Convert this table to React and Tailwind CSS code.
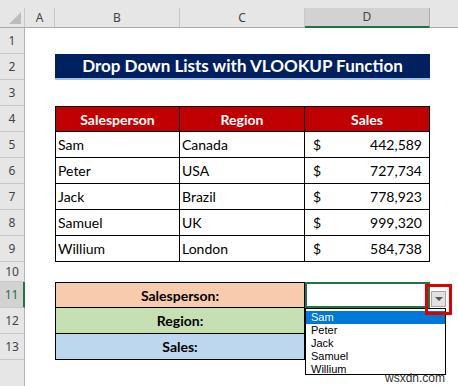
const rowsTop = [
  { name: "Sam", region: "Canada", sales: "442,589" },
  { name: "Peter", region: "USA", sales: "727,734" },
  { name: "Jack", region: "Brazil", sales: "778,923" },
  { name: "Samuel", region: "UK", sales: "999,320" },
  { name: "Willium", region: "London", sales: "584,738" },
];

const listItems = ["Sam", "Peter", "Jack", "Samuel", "Willium"];

const RowHead = ({ n, selected, h = "h-[26px]" }) => (
  <div
    className={`w-[25px] shrink-0 ${h} flex items-center justify-center text-[12px] font-['Noto_Sans',sans-serif] border-b border-[#c8c8c8] ${
      selected
        ? "bg-[#d2d2d2] text-[#217346] border-r-2 border-r-[#217346]"
        : "bg-[#e6e6e6] text-[#444] border-r border-r-[#b4b4b4]"
    }`}
  >
    {n}
  </div>
);

const Blank = ({ w }) => <div className={`${w} shrink-0 h-full`} />;

export default function App() {
  return (
    <div className="relative w-[458px] h-[386px] overflow-hidden bg-white font-['Lato',sans-serif] text-[14px] text-black">
      {/* Column headers */}
      <div className="h-[28px] bg-[#e6e6e6] flex flex-col">
        <div className="h-[9px]" />
        <div className="flex flex-1 border-b border-[#ababab] text-[12px] text-[#444] font-['Noto_Sans',sans-serif]">
          <div className="w-[25px] shrink-0 border-r border-[#c8c8c8] relative">
            <div className="absolute right-[3px] bottom-[3px] w-0 h-0 border-l-[12px] border-l-transparent border-b-[12px] border-b-[#bcbcbc]" />
          </div>
          <div className="w-[30px] shrink-0 border-r border-[#c8c8c8] flex items-center justify-center">A</div>
          <div className="w-[125px] shrink-0 border-r border-[#c8c8c8] flex items-center justify-center">B</div>
          <div className="w-[125px] shrink-0 border-r border-[#c8c8c8] flex items-center justify-center">C</div>
          <div className="w-[125px] shrink-0 border-r border-[#ababab] bg-[#d2d2d2] border-b-2 border-b-[#217346] flex items-center justify-center -mb-px">D</div>
          <div className="flex-1" />
        </div>
      </div>

      {/* Row 1 */}
      <div className="flex h-[26px]">
        <RowHead n="1" />
      </div>

      {/* Row 2 - title */}
      <div className="flex h-[26px]">
        <RowHead n="2" />
        <Blank w="w-[30px]" />
        <div className="w-[375px] shrink-0 h-full bg-[#002060] border-b-2 border-[#9dc3e6] flex items-center justify-center text-white font-bold text-[17px]">
          Drop Down Lists with VLOOKUP Function
        </div>
      </div>

      {/* Row 3 */}
      <div className="flex h-[26px]">
        <RowHead n="3" />
      </div>

      {/* Row 4 - table header */}
      <div className="flex h-[26px]">
        <RowHead n="4" />
        <Blank w="w-[30px]" />
        <div className="w-[125px] shrink-0 h-full bg-[#c00000] border border-black flex items-center justify-center text-white font-bold">Salesperson</div>
        <div className="w-[125px] shrink-0 h-full bg-[#c00000] border-y border-r border-black flex items-center justify-center text-white font-bold">Region</div>
        <div className="w-[125px] shrink-0 h-full bg-[#c00000] border-y border-r border-black flex items-center justify-center text-white font-bold">Sales</div>
      </div>

      {/* Rows 5-9 */}
      {rowsTop.map((r, i) => (
        <div key={r.name} className="flex h-[26px]">
          <RowHead n={String(i + 5)} />
          <Blank w="w-[30px]" />
          <div className="w-[125px] shrink-0 h-full border-x border-b border-black flex items-center pl-[2px]">{r.name}</div>
          <div className="w-[125px] shrink-0 h-full border-r border-b border-black flex items-center pl-[2px]">{r.region}</div>
          <div className="w-[125px] shrink-0 h-full border-r border-b border-black flex items-center justify-between pl-[8px] pr-[7px]">
            <span>$</span>
            <span>{r.sales}</span>
          </div>
        </div>
      ))}

      {/* Row 10 */}
      <div className="flex h-[20px]">
        <RowHead n="10" h="h-[20px]" />
      </div>

      {/* Row 11 */}
      <div className="flex h-[26px]">
        <RowHead n="11" selected />
        <Blank w="w-[30px]" />
        <div className="w-[250px] shrink-0 h-full bg-[#f8cbad] border border-black flex items-center justify-center font-bold">Salesperson:</div>
        <div className="w-[125px] shrink-0 h-full border-2 border-[#217346]" />
      </div>

      {/* Row 12 */}
      <div className="flex h-[26px]">
        <RowHead n="12" />
        <Blank w="w-[30px]" />
        <div className="w-[250px] shrink-0 h-full bg-[#c6e0b4] border-x border-b border-black flex items-center justify-center font-bold">Region:</div>
      </div>

      {/* Row 13 */}
      <div className="flex h-[26px]">
        <RowHead n="13" />
        <Blank w="w-[30px]" />
        <div className="w-[250px] shrink-0 h-full bg-[#bdd7ee] border-x border-b border-black flex items-center justify-center font-bold">Sales:</div>
      </div>

      {/* Filler */}
      <div className="flex h-[26px]">
        <div className="w-[25px] shrink-0 h-full bg-[#e6e6e6] border-r border-[#b4b4b4]" />
      </div>

      {/* Dropdown list */}
      <div className="absolute left-[305px] top-[308px] w-[141px] h-[67px] bg-white border border-black pt-[2px] font-['Liberation_Sans',sans-serif] text-[11px] leading-[13px]">
        {listItems.map((it, i) => (
          <div
            key={it}
            className={`h-[13px] pl-[5px] ${i === 0 ? "bg-[#0078d7] text-white" : "text-black"}`}
          >
            {it}
          </div>
        ))}
      </div>

      {/* Dropdown button */}
      <div className="absolute left-[431px] top-[291px] w-[15px] h-[16px] bg-[#e1e1e1] border border-[#a6a6a6] flex items-center justify-center">
        <div className="w-0 h-0 border-x-[4px] border-x-transparent border-t-[4px] border-t-[#555]" />
      </div>
      {/* Red highlight box */}
      <div className="absolute left-[425px] top-[284px] w-[27px] h-[31px] border-[3px] border-[#e00000]" />

      {/* Watermark */}
      <div className="absolute left-[385px] top-[371px] text-[12px] leading-[14px] text-[#333] font-['Liberation_Sans',sans-serif]">
        wsxdn.com
      </div>
    </div>
  );
}
